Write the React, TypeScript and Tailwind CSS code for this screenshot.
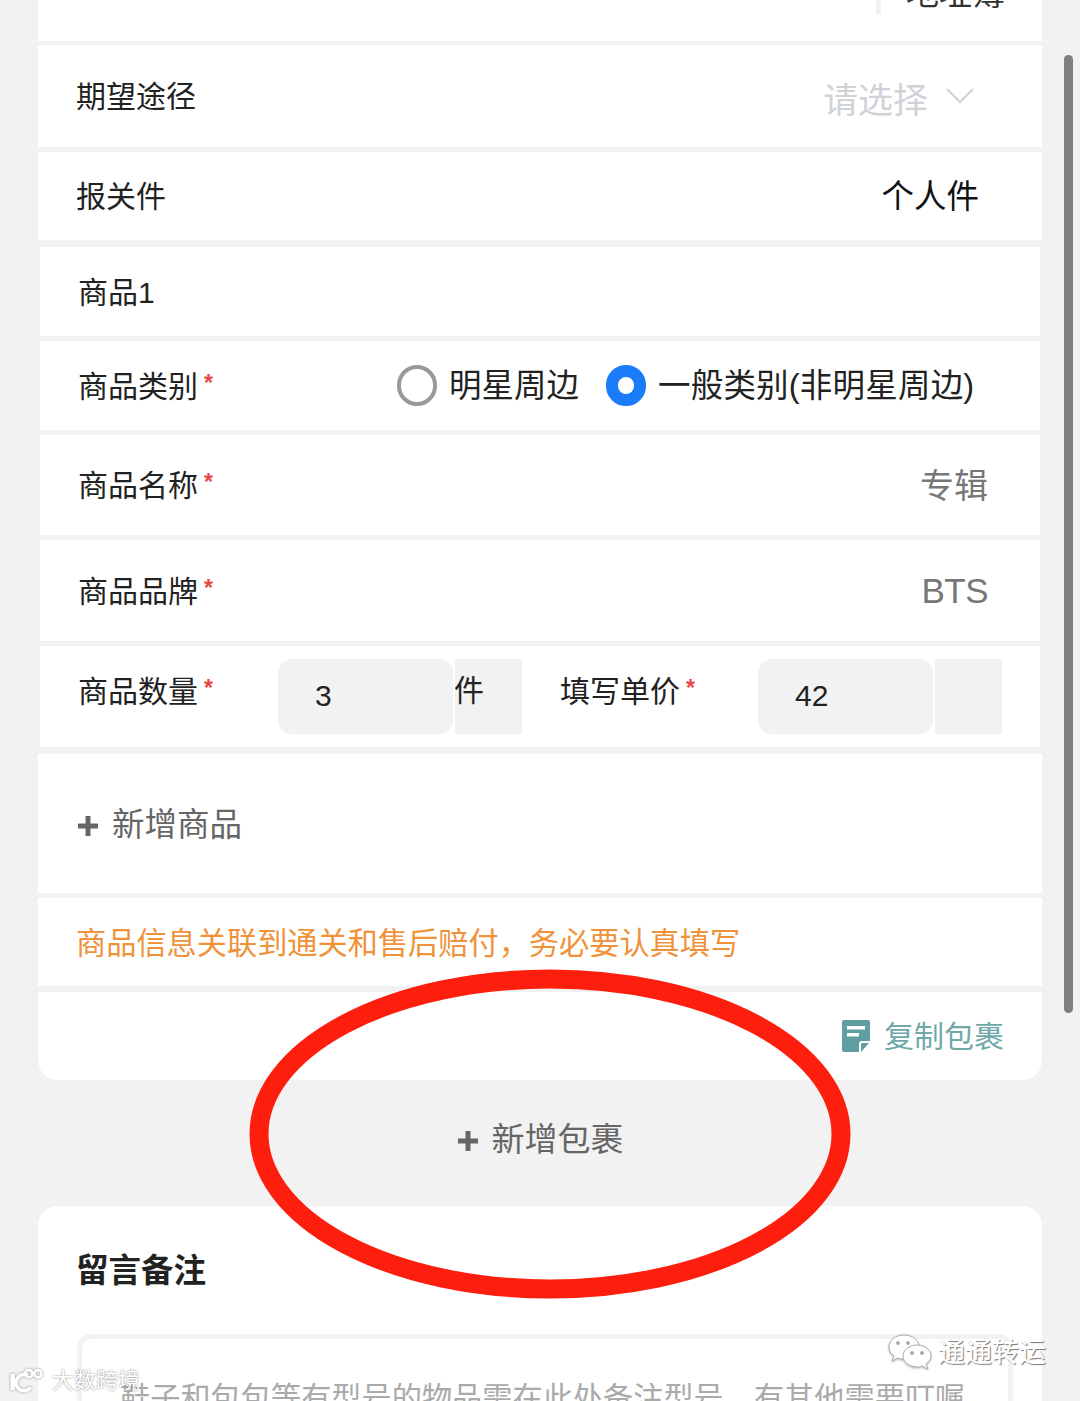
const font = { fontFamily: '"Liberation Sans", "Noto Sans CJK SC", sans-serif' };

function Star() {
  return <span className="ml-[6px] text-[23px] leading-none font-bold text-[#e8454a] self-start mt-[5px]">*</span>;
}

function Label({ text, star }: { text: string; star?: boolean }) {
  return (
    <div className="flex items-center text-[30px] leading-[40px] text-[#222] -ml-[1px] mt-[2px]">
      <span>{text}</span>
      {star && <Star />}
    </div>
  );
}

function Radio({ checked }: { checked?: boolean }) {
  if (checked) return <span className="w-[40px] h-[41px] rounded-full border-[12px] border-[#1a7cf8] bg-white shrink-0" />;
  return <span className="w-[40px] h-[41px] rounded-full border-[4px] border-[#999] bg-white shrink-0" />;
}

function NoteIcon() {
  return (
    <svg width="28" height="32" viewBox="0 0 28 32" className="shrink-0">
      <path d="M2 0h24a2 2 0 0 1 2 2v19h-8a3 3 0 0 0-3 3v8H2a2 2 0 0 1-2-2V2a2 2 0 0 1 2-2z" fill="#5f9ea0" />
      <path d="M20 23h7l-8 9v-8z" fill="#5f9ea0" />
      <rect x="5" y="6" width="18" height="3.5" fill="#fff" />
      <rect x="5" y="13" width="12" height="3.5" fill="#fff" />
    </svg>
  );
}

function Plus() {
  return (
    <svg width="22" height="22" viewBox="0 0 22 22" className="block shrink-0">
      <path d="M8.5 1h5v7.5H21v5h-7.5V21h-5v-7.5H1v-5h7.5z" fill="#666" />
    </svg>
  );
}

function QtyInput({ value, unit }: { value: string; unit?: string }) {
  return (
    <div className="flex h-[75px] gap-[2px]">
      <div className="w-[175px] rounded-[14px] bg-[#f2f2f2] pl-[37px] pt-[19px] text-[30px] leading-[36px] text-[#222]">{value}</div>
      <div className="w-[67px] bg-[#f2f2f2] text-[30px] leading-[40px] text-[#222] pt-[12px] -indent-[1px]">{unit}</div>
    </div>
  );
}

export default function App() {
  return (
    <div className="relative w-[1080px] h-[1401px] overflow-hidden bg-[#f2f2f2]" style={font}>
      <div className="w-[1004px] ml-[38px] -mt-[30px]">
        <div className="h-[71px] bg-white flex justify-end mb-[4px] pr-[37px]">
          <div className="w-[5px] h-[45px] bg-[#f2f2f2] mr-[25px]" />
          <div className="text-[33px] leading-[48px] text-[#333]">地址簿</div>
        </div>

        <div className="h-[102px] bg-white flex items-center justify-between pl-[39px] pr-[68px] mb-[5px]">
          <Label text="期望途径" />
          <div className="flex items-center gap-[18px]">
            <span className="text-[35px] leading-[44px] text-[#cfd2d6] mt-[10px]">请选择</span>
            <svg width="28" height="16" viewBox="0 0 28 16" className="-mt-[1px]">
              <path d="M1 1l13 13L27 1" fill="none" stroke="#cfd2d6" strokeWidth="2" />
            </svg>
          </div>
        </div>

        <div className="h-[88px] bg-white flex items-center justify-between pl-[39px] pr-[63px] mb-[7px]">
          <Label text="报关件" />
          <span className="text-[32.5px] leading-[40px] text-[#111] mt-[1px]">个人件</span>
        </div>

        <div className="mx-[2px]">
          <div className="h-[89px] bg-white flex items-center pl-[39px] mb-[5px]">
            <Label text="商品1" />
          </div>

          <div className="h-[89px] bg-white flex items-center pl-[39px] mb-[5px]">
            <div className="w-[318px]">
              <Label text="商品类别" star />
            </div>
            <Radio />
            <span className="ml-[12px] text-[32.5px] leading-[40px] text-[#222]">明星周边</span>
            <span className="ml-[27px]" />
            <Radio checked />
            <span className="ml-[12px] text-[32.5px] tracking-[0.2px] leading-[40px] text-[#222]">一般类别(非明星周边)</span>
          </div>

          <div className="h-[100px] bg-white flex items-center justify-between pl-[39px] pr-[52px] mb-[5px]">
            <Label text="商品名称" star />
            <span className="text-[34px] leading-[40px] text-[#777] mt-[2px]">专辑</span>
          </div>

          <div className="h-[101px] bg-white flex items-center justify-between pl-[39px] pr-[52px] mb-[5px]">
            <Label text="商品品牌" star />
            <span className="text-[35px] tracking-[-0.5px] leading-[40px] text-[#777]">BTS</span>
          </div>

          <div className="h-[101px] bg-white flex pl-[39px] pt-[13px] mb-[7px]">
            <div className="w-[199px] pt-[11px]">
              <Label text="商品数量" star />
            </div>
            <QtyInput value="3" unit="件" />
            <div className="w-[236px] pl-[39px] pt-[11px]">
              <Label text="填写单价" star />
            </div>
            <QtyInput value="42" />
          </div>
        </div>

        <div className="h-[139px] bg-white flex items-center pl-[39px] gap-[13px] mb-[5px]">
          <span className="mt-[5px]">
            <Plus />
          </span>
          <span className="text-[32.5px] leading-[40px] text-[#666] mt-[3px]">新增商品</span>
        </div>

        <div className="h-[88px] bg-white flex items-center pl-[38px] mb-[6px]">
          <span className="text-[30.2px] leading-[40px] text-[#f0923a] mt-[4px]">商品信息关联到通关和售后赔付，务必要认真填写</span>
        </div>

        <div className="h-[88px] bg-white rounded-b-[20px] flex items-center justify-end pr-[38px] gap-[14px]">
          <NoteIcon />
          <span className="text-[30px] leading-[40px] text-[#6fa8a8] mt-[2px]">复制包裹</span>
        </div>

        <div className="h-[126px] flex items-center justify-center gap-[13px]">
          <span className="-mt-[5px]">
            <Plus />
          </span>
          <span className="text-[33px] leading-[40px] text-[#666] -mt-[7px]">新增包裹</span>
        </div>

        <div className="h-[300px] bg-white rounded-t-[20px] px-[39px] pt-[43px]">
          <div className="text-[32.5px] leading-[44px] font-bold text-[#222] -ml-[1px]">留言备注</div>
          <div className="mt-[41px] w-[936px] h-[200px] border-[5px] border-[#f2f2f2] rounded-[14px] pl-[38px] pt-[40px] text-[30.2px] leading-[40px] text-[#aaa] whitespace-nowrap">
            鞋子和包包等有型号的物品需在此处备注型号，有其他需要叮嘱
          </div>
        </div>
      </div>

      {/* scrollbar */}
      <div className="absolute left-[1064px] top-[55px] w-[9px] h-[958px] rounded-full bg-[#7f7f7f]" />

      {/* hand drawn annotation */}
      <svg className="absolute left-[240px] top-[960px]" width="620" height="350" viewBox="0 0 620 350">
        <ellipse cx="310" cy="174" rx="291" ry="155" fill="none" stroke="#fe1e0e" strokeWidth="19" />
      </svg>

      {/* watermarks */}
      <div className="absolute left-[10px] top-[1367px] flex items-center gap-[6px] text-white">
        <svg width="36" height="28" viewBox="0 0 40 28" fill="none" stroke="#fff" strokeWidth="3" style={{ filter: "drop-shadow(0 0 1px #888)" }}>
          <path d="M3 6v18" strokeWidth="5" />
          <path d="M20 8a9 9 0 1 0 3 13" strokeWidth="4" />
          <circle cx="21" cy="6" r="4" />
          <circle cx="31" cy="6" r="4" />
        </svg>
        <span className="text-[22px] leading-[28px] [text-shadow:0_0_2px_#777]">大数跨境</span>
      </div>
      <div className="absolute left-[888px] top-[1334px] flex items-center gap-[6px]">
        <svg width="44" height="38" viewBox="0 0 44 38" fill="#fff" stroke="#aaa" strokeWidth="1" style={{ filter: "drop-shadow(0 1px 1px #bbb)" }}>
          <path d="M16 1C8 1 1 6 1 13c0 4 2 7 5 9l-2 5 6-3c2 1 4 1 6 1 8 0 15-5 15-12S24 1 16 1z" />
          <path d="M29 11c-8 0-14 5-14 11s6 11 14 11c2 0 3 0 5-1l6 3-2-5c3-2 5-5 5-8 0-6-6-11-14-11z" />
          <circle cx="10" cy="9" r="1.5" fill="#aaa" />
          <circle cx="20" cy="9" r="1.5" fill="#aaa" />
          <circle cx="24" cy="19" r="1.5" fill="#aaa" />
          <circle cx="34" cy="19" r="1.5" fill="#aaa" />
        </svg>
        <span className="text-[27px] leading-[32px] text-white [text-shadow:1px_1px_1px_#777]">通通转运</span>
      </div>
    </div>
  );
}
